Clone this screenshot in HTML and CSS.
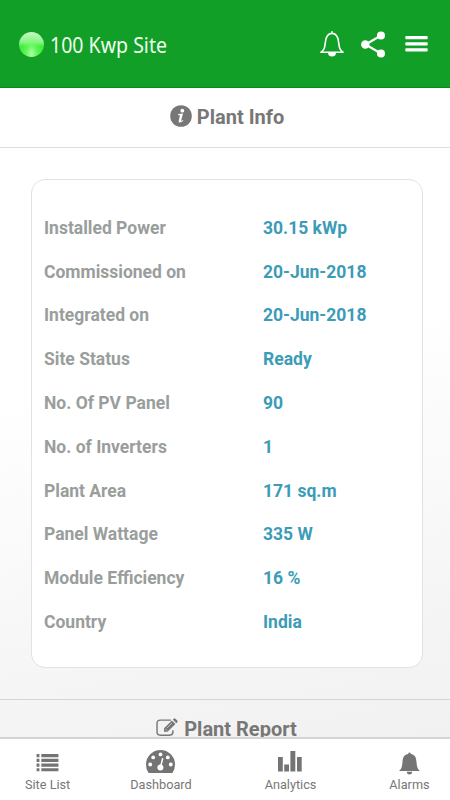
FILE: index.html
```html
<!DOCTYPE html>
<html lang="en">
<head>
<meta charset="utf-8">
<title>100 Kwp Site</title>
<link rel="stylesheet" href="styles.css">
</head>
<body>
<div class="app">
  <header class="topbar">
    <span class="status"></span>
    <h1 class="site-name">100 Kwp Site</h1>
    <div class="actions">
      <svg width="24" height="26" viewBox="0 0 24 26"><path d="M12 .8v1.5M1 21.2h22c-3.5-2.2-3.8-5-4.4-10C18 5.5 16.4 2.4 12 2.4S6 5.5 5.4 11.200C4.800 16.200 4.500 19 1 21.200z" fill="none" stroke="#fff" stroke-width="1.6" stroke-linejoin="round" stroke-linecap="round"/><path d="M8 21.500a4 4 0 0 0 8 0z" fill="#fff"/></svg>
      <svg width="25" height="27" viewBox="0 0 25 27"><path d="M20 4.500 4.500 13.500 20 22.500" fill="none" stroke="#fff" stroke-width="2.200"/><circle cx="20" cy="4.500" r="4" fill="#fff"/><circle cx="4.300" cy="13.500" r="4.200" fill="#fff"/><circle cx="20" cy="22.600" r="4" fill="#fff"/></svg>
      <svg width="23" height="18" viewBox="0 0 23 18"><g fill="#fff"><rect x=".3" y="1" width="22.400" height="3.300" rx=".8"/><rect x=".3" y="7.200" width="22.400" height="3.300" rx=".8"/><rect x=".3" y="13.200" width="22.400" height="3.300" rx=".8"/></g></svg>
    </div>
  </header>
  <main class="content">
    <h2 class="section-title info-title">
      <svg width="22" height="22" viewBox="0 0 22 22"><circle cx="11" cy="11" r="10.800" fill="#777"/><circle cx="12.300" cy="5.700" r="1.900" fill="#fff"/><path d="M8.200 9.100 13 8.500 11.200 15.300c-.2.900.4.800 1.500-.3l.7.600c-1.700 2.100-5.300 3-4.700.3L10 10.200H8.100z" fill="#fff"/></svg>
      <span>Plant Info</span>
    </h2>
    <section class="card">
      <dl class="facts">
        <div><dt>Installed Power</dt><dd>30.15 kWp</dd></div>
        <div><dt>Commissioned on</dt><dd>20-Jun-2018</dd></div>
        <div><dt>Integrated on</dt><dd>20-Jun-2018</dd></div>
        <div><dt>Site Status</dt><dd>Ready</dd></div>
        <div><dt>No. Of PV Panel</dt><dd>90</dd></div>
        <div><dt>No. of Inverters</dt><dd>1</dd></div>
        <div><dt>Plant Area</dt><dd>171 sq.m</dd></div>
        <div><dt>Panel Wattage</dt><dd>335 W</dd></div>
        <div><dt>Module Efficiency</dt><dd>16 %</dd></div>
        <div><dt>Country</dt><dd>India</dd></div>
      </dl>
    </section>
    <h2 class="section-title report-title">
      <svg width="23" height="19" viewBox="0 0 24 20"><path d="M15.500 2.200H4.500Q1 2.200 1 5.500v9.300q0 3.300 3.500 3.300h9.800q3.400 0 3.400-3.300v-2" fill="none" stroke="#777" stroke-width="1.500"/><path d="m8.300 10.800 8.400-8.300 3.700 3.700-8.400 8.300H8.300zM17.600 1.700l1-1q.9-.8 1.800 0l1.900 1.900q.8.900 0 1.800l-1 1z" fill="#777"/><path d="m9.500 11.200 2 2M11.500 10.500l5.300-5.300" stroke="#f1f1f1" stroke-width=".6"/></svg>
      <span>Plant Report</span>
    </h2>
  </main>
  <nav class="tabs">
    <a class="tab list"><svg width="23" height="19" viewBox="0 0 23 20"><path d="M0 1h3v3.500H0zM5 1h18v3.500H5zM0 6h3v3.500H0zM5 6h18v3.500H5zM0 11h3v3.500H0zM5 11h18v3.500H5zM0 16h3v3.300H0zM5 16h18v3.300H5z" fill="#747474"/></svg><span>Site List</span></a>
    <a class="tab dash"><svg width="29" height="23" viewBox="0 0 29 23"><path d="M2.300 22.500Q0 19 0 14.500a14.500 14.500 0 0 1 29 0q0 4.500-2.300 8-.3.500-1 .5H3.300q-.7 0-1-.5z" fill="#747474"/><g fill="#fff"><circle cx="4.200" cy="14.500" r="1.900"/><circle cx="7.200" cy="7.400" r="1.900"/><circle cx="14.500" cy="4.400" r="1.900"/><circle cx="21.800" cy="7.400" r="1.900"/><circle cx="24.800" cy="14.500" r="1.900"/><circle cx="14.400" cy="17.500" r="3"/></g><path d="m14.700 16.500 1.900-7.800" stroke="#fff" stroke-width="1.500" stroke-linecap="round"/></svg><span>Dashboard</span></a>
    <a class="tab chart"><svg width="24" height="21" viewBox="0 0 24 21"><path d="M0 6h4.800v14.500H0zM6.200 13.500H11v7H6.200zM12.400 0h4.900v20.500h-4.900zM19 6h4.700v14.500H19z" fill="#747474"/></svg><span>Analytics</span></a>
    <a class="tab bell"><svg width="21" height="23" viewBox="0 0 21 23"><path d="M9.300 1.900V1q1.200-1 2.400 0v.9c4.500.6 5.500 3.600 5.800 8 .3 4.700 1 7 3.500 9.200H0c2.500-2.200 3.200-4.500 3.500-9.200.3-4.400 1.300-7.400 5.800-8zM7.700 19.800h5.600q-.3 2.700-2.800 2.700t-2.800-2.700z" fill="#747474"/></svg><span>Alarms</span></a>
  </nav>
</div>
</body>
</html>
```
FILE: styles.css
```css
* { box-sizing: border-box; }
body { margin: 0; font-family: Roboto, "Liberation Sans", sans-serif; }
h1, h2, dl, dd { margin: 0; }
svg { display: block; flex: none; }
.app {
  width: 450px;
  height: 800px;
  display: flex;
  flex-direction: column;
  overflow: hidden;
}
.topbar {
  flex: none;
  height: 88px;
  padding: 1px 22px 0 19px;
  display: flex;
  align-items: center;
  background: #129f27;
  border-bottom: 1px solid #078d16;
}
.status {
  width: 25px;
  height: 25px;
  border-radius: 50%;
  background:
    radial-gradient(ellipse at 50% 90%, #b4ffb0 0, rgba(120, 255, 110, .6) 30%, transparent 62%),
    linear-gradient(#c4fac1 0, #8cf488 40%, #3cec38 58%, #42ee3c 100%);
}
.site-name {
  margin-left: 6px;
  width: 116px;
  white-space: nowrap;
  font: 400 22px/30px "Noto Sans", sans-serif;
  color: #f0fff0;
  transform: scaleX(.888);
  transform-origin: 0 50%;
}
.actions {
  margin-left: auto;
  display: flex;
  align-items: center;
  gap: 17px;
}
.actions svg:nth-child(2) { margin-right: 2px; }
.content {
  flex: 1;
  min-height: 0;
  overflow: hidden;
  background: linear-gradient(168deg, #fff 0, #fff 42%, #f3f3f3 90%, #f1f1f1 100%);
}
.section-title {
  display: flex;
  justify-content: center;
  align-items: center;
  gap: 5px;
  height: 60px;
  font-size: 20px;
  line-height: 24px;
  font-weight: 700;
  color: #777;
}
.info-title {
  padding: 0 0 2px 4px;
  border-bottom: 1px solid #dedede;
}
.info-title svg { margin-bottom: 1px; }
.card {
  margin: 31px 27px 31px 31px;
  height: 489px;
  padding: 26px 12px;
  border: 1px solid #e2e2e2;
  border-radius: 14px;
  background: #fff;
}
.facts > div {
  display: grid;
  grid-template-columns: 219px 1fr;
  align-items: center;
  height: 43.8px;
  font-size: 17.5px;
  font-weight: 700;
}
.facts dt { color: #999e9c; }
.facts dd { color: #3c9cb7; }
.report-title {
  padding: 0 0 2px 3px;
  border-top: 1px solid #d4d4d4;
}
.report-title svg { margin-bottom: 3px; }
.tabs {
  flex: none;
  height: 63px;
  display: flex;
  padding-left: 25px;
  border-top: 2px solid #d4d4d4;
  background: #fff;
}
.tab {
  display: flex;
  flex-direction: column;
  align-items: center;
  justify-content: flex-end;
  padding-bottom: 7px;
  font-size: 12.7px;
  line-height: 16px;
  color: #777;
}
.tab svg { margin-bottom: 4px; }
.tab.list svg { margin-bottom: 5px; }
.tab.dash { margin-left: 60px; }
.tab.chart { margin-left: 73px; }
.tab.chart svg { margin-bottom: 5px; }
.tab.bell { margin-left: 73px; }
.tab.bell svg { margin-bottom: 2px; }
```
